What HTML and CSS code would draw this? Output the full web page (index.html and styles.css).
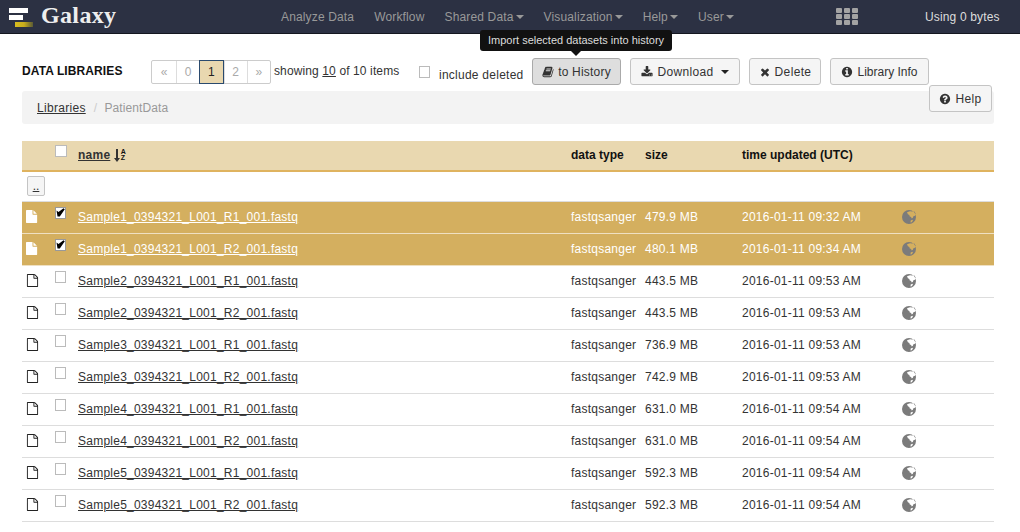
FILE: index.html
```html
<!DOCTYPE html>
<html lang="en">
<head>
  <meta charset="UTF-8" />
  <title>Galaxy</title>
  <link rel="stylesheet" href="styles.css">
</head>
<body>
  <svg class="defs" width="0" height="0">
    <symbol id="i-file-o" viewBox="0 0 1792 1792"><path d="M1596 380q28 28 48 76t20 88v1152q0 40-28 68t-68 28h-1344q-40 0-68-28t-28-68v-1600q0-40 28-68t68-28h896q40 0 88 20t76 48zm-444-244v376h376q-10-29-22-41l-313-313q-12-12-41-22zm384 1528v-1024h-416q-40 0-68-28t-28-68v-416h-768v1536h1280z"/></symbol>
    <symbol id="i-file" viewBox="0 0 1792 1792"><path d="M1024 512v-472q22 14 36 28l408 408q14 14 28 36h-472zm-128 32q0 40 28 68t68 28h544v1056q0 40-28 68t-68 28h-1344q-40 0-68-28t-28-68v-1600q0-40 28-68t68-28h800v544z"/></symbol>
    <symbol id="i-globe" viewBox="0 0 14 14"><path fill-rule="evenodd" d="M7 0a7 7 0 1 1 0 14A7 7 0 0 1 7 0zM5 2.2l.9 2.1 1.4.7.5 1.4 1.3.6.6 1.6 1.2-.9.5-1.5 1.6-.4.6-2.2-1.2-2L8 1.2zM8.7 10.4l-.2 2 1.2-.1 1.2-1.6-.3-1z"/></symbol>
    <symbol id="i-check" viewBox="0 0 11 11"><path d="M1.5 3.5 3.5 5 8.5 1.2 9.8 2.2 4.8 9.5H2.5z"/></symbol>
  </svg>

  <header class="navbar">
    <a class="brand">
      <span class="logo"><i class="bar-a"></i><i class="bar-b"></i><i class="bar-c"></i></span>
      <span class="brand-name">Galaxy</span>
    </a>
    <nav class="nav-menu">
      <a>Analyze Data</a>
      <a>Workflow</a>
      <a>Shared Data<b class="caret"></b></a>
      <a>Visualization<b class="caret"></b></a>
      <a>Help<b class="caret"></b></a>
      <a>User<b class="caret"></b></a>
    </nav>
    <svg class="apps" width="22" height="17" viewBox="0 0 22 17" fill="#a3a3a3">
      <rect width="6" height="5" rx="1"/><rect x="8" width="6" height="5" rx="1"/><rect x="16" width="6" height="5" rx="1"/>
      <rect y="6" width="6" height="5" rx="1"/><rect x="8" y="6" width="6" height="5" rx="1"/><rect x="16" y="6" width="6" height="5" rx="1"/>
      <rect y="12" width="6" height="5" rx="1"/><rect x="8" y="12" width="6" height="5" rx="1"/><rect x="16" y="12" width="6" height="5" rx="1"/>
    </svg>
    <span class="quota">Using 0 bytes</span>
  </header>

  <main class="page">
    <div class="toolbar">
      <strong class="title">DATA LIBRARIES</strong>
      <ul class="pager">
        <li class="wide">«</li><li>0</li><li class="current">1</li><li>2</li><li>»</li>
      </ul>
      <span class="showing">showing <u>10</u> of 10 items</span>
      <label class="include"><span class="box"></span><span class="include-text">include deleted</span></label>
      <button class="btn btn-history active">
        <svg class="ico" viewBox="0 0 1792 1792"><path d="M1703 478q40 57 18 129l-275 906q-19 64-76.5 107.5t-122.5 43.5h-923q-77 0-148.5-53.5t-99.5-131.5q-24-67-2-127 0-4 3-27t4-37q1-8-3-21.5t-3-19.5q2-11 8-21t16.5-23.5 16.5-23.5q23-38 45-91.5t30-91.5q3-10 .5-30t-.5-28q3-11 17-28t17-23q21-36 42-92t25-90q1-9-2.5-32t.5-28q4-13 22-30.5t22-22.5q19-26 42.5-84.5t27.5-96.5q1-8-3-25.5t-2-26.5q2-8 9-18t18-23 17-21q8-12 16.5-30.5t15-35 16-36 19.5-32 26.5-23.5 36-11.5 47.5 5.5l-1 3q38-9 51-9h761q74 0 114 56t18 130l-274 906q-36 119-71.5 153.5t-128.5 34.5h-869q-27 0-38 15-11 16-1 43 24 70 144 70h923q29 0 56-15.5t35-41.5l300-987q7-22 5-57 38 15 59 43zm-1064 2q-4 13 2 22.5t20 9.5h608q13 0 25.5-9.5t16.5-22.5l21-64q4-13-2-22.5t-20-9.5h-608q-13 0-25.5 9.5t-16.5 22.5zm-83 256q-4 13 2 22.5t20 9.5h608q13 0 25.5-9.5t16.5-22.5l21-64q4-13-2-22.5t-20-9.5h-608q-13 0-25.5 9.5t-16.5 22.5z"/></svg>
        to History
      </button>
      <button class="btn btn-download">
        <svg class="ico" viewBox="0 0 1792 1792"><path d="M1344 1344q0-26-19-45t-45-19-45 19-19 45 19 45 45 19 45-19 19-45zm256 0q0-26-19-45t-45-19-45 19-19 45 19 45 45 19 45-19 19-45zm128-224v320q0 40-28 68t-68 28h-1472q-40 0-68-28t-28-68v-320q0-40 28-68t68-28h465l135 136q58 56 136 56t136-56l136-136h464q40 0 68 28t28 68zm-325-569q17 41-14 70l-448 448q-18 19-45 19t-45-19l-448-448q-31-29-14-70 17-39 59-39h256v-448q0-26 19-45t45-19h256q26 0 45 19t19 45v448h256q42 0 59 39z"/></svg>
        Download <b class="caret dark"></b>
      </button>
      <button class="btn btn-delete">
        <svg class="ico" viewBox="0 0 1792 1792"><path d="M1490 1322q0 40-28 68l-136 136q-28 28-68 28t-68-28l-294-294-294 294q-28 28-68 28t-68-28l-136-136q-28-28-28-68t28-68l294-294-294-294q-28-28-28-68t28-68l136-136q28-28 68-28t68 28l294 294 294-294q28-28 68-28t68 28l136 136q28 28 28 68t-28 68l-294 294 294 294q28 28 28 68z"/></svg>
        Delete
      </button>
      <button class="btn btn-info">
        <svg class="ico" viewBox="0 0 1792 1792"><path d="M1152 1376v-160q0-14-9-23t-23-9h-96v-512q0-14-9-23t-23-9h-320q-14 0-23 9t-9 23v160q0 14 9 23t23 9h96v320h-96q-14 0-23 9t-9 23v160q0 14 9 23t23 9h448q14 0 23-9t9-23zm-128-896v-160q0-14-9-23t-23-9h-192q-14 0-23 9t-9 23v160q0 14 9 23t23 9h192q14 0 23-9t9-23zm640 416q0 209-103 385.5t-279.5 279.5-385.5 103-385.5-103-279.5-279.5-103-385.5 103-385.5 279.5-279.5 385.5-103 385.5 103 279.5 279.5 103 385.5z"/></svg>
        Library Info
      </button>
    </div>

    <div class="tooltip">Import selected datasets into history</div>
    <button class="btn btn-help">
      <svg class="ico" viewBox="0 0 1792 1792"><path d="M1024 1376v-192q0-14-9-23t-23-9h-192q-14 0-23 9t-9 23v192q0 14 9 23t23 9h192q14 0 23-9t9-23zm256-672q0-88-55.5-163t-138.5-116-170-41q-243 0-371 213-15 24 8 42l132 100q7 6 19 6 16 0 25-12 53-68 86-92 34-24 86-24 48 0 85.5 26t37.5 59q0 38-20 61t-68 45q-63 28-115.5 86.5t-52.5 125.5v36q0 14 9 23t23 9h192q14 0 23-9t9-23q0-19 21.5-49.5t54.5-49.5q32-18 49-28.5t46-35 44.5-48 28-60.5 12.5-81zm384 192q0 209-103 385.5t-279.5 279.5-385.5 103-385.5-103-279.5-279.5-103-385.5 103-385.5 279.5-279.5 385.5-103 385.5 103 279.5 279.5 103 385.5z"/></svg>
      Help
    </button>

    <div class="crumbs"><a>Libraries</a><span class="sep">/</span><span class="crumb-here">PatientData</span></div>

    <table class="files">
      <colgroup>
        <col class="c-icon"><col class="c-check"><col class="c-name"><col class="c-type"><col class="c-size"><col class="c-time"><col>
      </colgroup>
      <thead>
        <tr>
          <th></th>
          <th><span class="box"></span></th>
          <th><a class="sort">name</a> <span class="sort-icon"><svg width="6" height="13" viewBox="0 0 6 13"><path d="M2 0h2v9h2L3 13 0 9h2z"/></svg><span class="az">A<br>Z</span></span></th>
          <th>data type</th>
          <th>size</th>
          <th>time updated (UTC)</th>
          <th></th>
        </tr>
      </thead>
      <tbody>
        <tr class="up"><td colspan="7"><button class="btn-up">..</button></td></tr>
        <tr class="selected"><td><svg class="file"><use href="#i-file"/></svg></td><td><span class="box on"><svg><use href="#i-check"/></svg></span></td><td><a>Sample1_0394321_L001_R1_001.fastq</a></td><td>fastqsanger</td><td>479.9 MB</td><td>2016-01-11 09:32 AM</td><td><svg class="globe"><use href="#i-globe"/></svg></td></tr>
        <tr class="selected"><td><svg class="file"><use href="#i-file"/></svg></td><td><span class="box on"><svg><use href="#i-check"/></svg></span></td><td><a>Sample1_0394321_L001_R2_001.fastq</a></td><td>fastqsanger</td><td>480.1 MB</td><td>2016-01-11 09:34 AM</td><td><svg class="globe"><use href="#i-globe"/></svg></td></tr>
        <tr><td><svg class="file"><use href="#i-file-o"/></svg></td><td><span class="box"></span></td><td><a>Sample2_0394321_L001_R1_001.fastq</a></td><td>fastqsanger</td><td>443.5 MB</td><td>2016-01-11 09:53 AM</td><td><svg class="globe"><use href="#i-globe"/></svg></td></tr>
        <tr><td><svg class="file"><use href="#i-file-o"/></svg></td><td><span class="box"></span></td><td><a>Sample2_0394321_L001_R2_001.fastq</a></td><td>fastqsanger</td><td>443.5 MB</td><td>2016-01-11 09:53 AM</td><td><svg class="globe"><use href="#i-globe"/></svg></td></tr>
        <tr><td><svg class="file"><use href="#i-file-o"/></svg></td><td><span class="box"></span></td><td><a>Sample3_0394321_L001_R1_001.fastq</a></td><td>fastqsanger</td><td>736.9 MB</td><td>2016-01-11 09:53 AM</td><td><svg class="globe"><use href="#i-globe"/></svg></td></tr>
        <tr><td><svg class="file"><use href="#i-file-o"/></svg></td><td><span class="box"></span></td><td><a>Sample3_0394321_L001_R2_001.fastq</a></td><td>fastqsanger</td><td>742.9 MB</td><td>2016-01-11 09:53 AM</td><td><svg class="globe"><use href="#i-globe"/></svg></td></tr>
        <tr><td><svg class="file"><use href="#i-file-o"/></svg></td><td><span class="box"></span></td><td><a>Sample4_0394321_L001_R1_001.fastq</a></td><td>fastqsanger</td><td>631.0 MB</td><td>2016-01-11 09:54 AM</td><td><svg class="globe"><use href="#i-globe"/></svg></td></tr>
        <tr><td><svg class="file"><use href="#i-file-o"/></svg></td><td><span class="box"></span></td><td><a>Sample4_0394321_L001_R2_001.fastq</a></td><td>fastqsanger</td><td>631.0 MB</td><td>2016-01-11 09:54 AM</td><td><svg class="globe"><use href="#i-globe"/></svg></td></tr>
        <tr><td><svg class="file"><use href="#i-file-o"/></svg></td><td><span class="box"></span></td><td><a>Sample5_0394321_L001_R1_001.fastq</a></td><td>fastqsanger</td><td>592.3 MB</td><td>2016-01-11 09:54 AM</td><td><svg class="globe"><use href="#i-globe"/></svg></td></tr>
        <tr><td><svg class="file"><use href="#i-file-o"/></svg></td><td><span class="box"></span></td><td><a>Sample5_0394321_L001_R2_001.fastq</a></td><td>fastqsanger</td><td>592.3 MB</td><td>2016-01-11 09:54 AM</td><td><svg class="globe"><use href="#i-globe"/></svg></td></tr>
      </tbody>
    </table>
  </main>
</body>
</html>
```

FILE: styles.css
```css
* {
  box-sizing: border-box;
}

html, body {
  height: 532px;
  overflow: hidden;
}

body {
  margin: 0;
  background: #fff;
  color: #333;
  font-family: "Liberation Sans", Arial, sans-serif;
  font-size: 12px;
  position: relative;
}

.defs {
  position: absolute;
}

/* top bar */
.navbar {
  display: flex;
  align-items: center;
  height: 34px;
  background: #2c3143;
  border-bottom: 1px solid #14161f;
  color: #999;
}

.brand {
  display: flex;
  align-items: center;
  width: 281px;
  padding-left: 8px;
}

.logo {
  position: relative;
  width: 33px;
  height: 33px;
  flex: none;
}

.logo i {
  position: absolute;
  height: 5px;
}

.bar-a { left: 1px; top: 8px; width: 19px; background: #fff; }
.bar-b { left: 1px; top: 15px; width: 14px; background: #fff; }
.bar-c { left: 7px; top: 22px; width: 18px; background: linear-gradient(90deg, #d9bd1f, #c9ad1c 50%, #5a5a35); }

.brand-name {
  margin-top: -3px;
  font-family: "Liberation Serif", serif;
  font-size: 24px;
  font-weight: bold;
  letter-spacing: 0.35px;
  color: #eee;
}

.nav-menu {
  display: flex;
  gap: 20px;
  width: 555px;
  font-size: 12px;
  letter-spacing: 0.15px;
}

.caret {
  display: inline-block;
  width: 0;
  height: 0;
  margin-left: 2px;
  vertical-align: middle;
  border-left: 4px solid transparent;
  border-right: 4px solid transparent;
  border-top: 4px solid #999;
}

.caret.dark {
  border-top-color: #222;
  margin-left: 3px;
}

.apps {
  flex: none;
}

.quota {
  margin-left: 67px;
  color: #ddd;
  font-size: 12px;
  letter-spacing: 0.15px;
  white-space: nowrap;
}

/* page */
.page {
  position: relative;
  width: 994px;
  padding: 24px 0 0 22px;
}

.toolbar {
  display: flex;
  align-items: flex-start;
  height: 33px;
}

.title {
  width: 129px;
  margin-top: 6px;
  color: #111;
  font-size: 12px;
  letter-spacing: 0.1px;
}

.pager {
  display: flex;
  width: 120px;
  height: 24px;
  margin: 2px 0 0;
  padding: 0;
  list-style: none;
  border: 1px solid #ccc;
  border-radius: 2px;
  color: #aaa;
}

.pager li {
  flex: 1;
  display: flex;
  align-items: center;
  justify-content: center;
  border-left: 1px solid #ddd;
}

.pager li:first-child {
  border-left: 0;
}

.pager .wide {
  flex: none;
  width: 24px;
}

.pager .current {
  margin: -1px 0;
  background: #e9d8b0;
  border: 1px solid #2a4a6e;
  color: #222;
}

.showing {
  margin: 6px 0 0 3px;
  width: 145px;
  color: #333;
  letter-spacing: 0.12px;
  white-space: nowrap;
}

.include {
  display: flex;
  width: 113px;
  margin-top: 8px;
}

.include-text {
  margin: 2px 0 0 9px;
  letter-spacing: 0.25px;
  white-space: nowrap;
}

.box {
  display: inline-block;
  width: 11px;
  height: 12px;
  background: #fff;
  border: 1px solid #bbb;
}

.box.on {
  border-color: #999;
  position: relative;
}

.box.on svg {
  display: block;
  position: absolute;
  left: -1px;
  top: -1px;
  width: 11px;
  height: 11px;
  fill: #000;
}

.btn {
  display: flex;
  align-items: center;
  justify-content: center;
  gap: 4px;
  height: 27px;
  padding: 0;
  background: #f5f5f5;
  border: 1px solid #c4c4c4;
  border-radius: 3px;
  color: #333;
  font-family: inherit;
  font-size: 12px;
  letter-spacing: 0.35px;
}

.btn.active {
  background: #dedede;
  border-color: #aaa;
}

.ico {
  width: 12px;
  height: 12px;
  fill: #333;
  flex: none;
}

.btn-history { width: 89px; letter-spacing: 0.2px; }
.btn-download { width: 110px; margin-left: 9px; }
.btn-delete { width: 72px; margin-left: 9px; }
.btn-info { width: 99px; margin-left: 9px; letter-spacing: 0; }

.btn-help {
  position: absolute;
  left: 929px;
  top: 51px;
  width: 63px;
}

.tooltip {
  position: absolute;
  left: 480px;
  top: -4px;
  width: 192px;
  height: 21px;
  background: #111;
  border-radius: 3px;
  color: #ddd;
  font-size: 11px;
  line-height: 21px;
  text-align: center;
  z-index: 2;
}

.tooltip::after {
  content: "";
  position: absolute;
  left: 91px;
  top: 21px;
  border-left: 5px solid transparent;
  border-right: 5px solid transparent;
  border-top: 5px solid #111;
}

.crumbs {
  display: flex;
  align-items: center;
  height: 33px;
  padding-left: 15px;
  background: #f3f3f3;
  border-radius: 3px;
  letter-spacing: 0.3px;
}

.crumbs a {
  color: #333;
  text-decoration: underline;
}

.sep {
  margin: 0 7px 0 8px;
  color: #ccc;
}

.crumb-here {
  color: #999;
  letter-spacing: 0.1px;
}

/* table */
.files {
  width: 972px;
  margin-top: 17px;
  border-collapse: collapse;
  table-layout: fixed;
  letter-spacing: 0.24px;
}

.c-icon { width: 28px; }
.c-check { width: 23px; }
.c-name { width: 493px; }
.c-type { width: 74px; }
.c-size { width: 97px; }
.c-time { width: 160px; }

.files thead tr {
  height: 30px;
  background: #e9d8b0;
  border-bottom: 2px solid #dfb35f;
}

.files th {
  padding: 0 5px 2px;
  color: #111;
  font-size: 12px;
  text-align: left;
  white-space: nowrap;
  letter-spacing: 0;
}

.files th .box {
  display: block;
  margin-top: -7px;
  width: 12px;
}

.sort {
  color: #333;
  letter-spacing: 0.24px;
  text-decoration: underline;
}

.sort-icon {
  display: inline-flex;
  align-items: center;
  gap: 1px;
  height: 13px;
  vertical-align: -3px;
}

.sort-icon svg {
  fill: #333;
}

.az {
  font-size: 7px;
  line-height: 6.5px;
}

.files td {
  height: 32px;
  padding: 0 5px 1px;
  white-space: nowrap;
  vertical-align: middle;
}

.files tbody tr {
  border-bottom: 1px solid #ddd;
}

.files td a {
  color: #333;
  text-decoration: underline;
}

.files .up td {
  height: 30px;
  padding: 0 5px;
}

.btn-up {
  display: block;
  width: 18px;
  height: 20px;
  padding: 0;
  background: #f5f5f5;
  border: 1px solid #c4c4c4;
  border-radius: 2px;
  color: #333;
  font-family: inherit;
  font-size: 12px;
  text-decoration: underline;
}

.selected {
  background: #d4af5f;
  color: #fff;
}

.files .selected {
  border-bottom-color: #efe0c2;
}

.files .selected td a {
  color: #fff;
}

.file {
  display: block;
  width: 13px;
  height: 13px;
  margin-left: -1px;
  fill: #222;
}

.selected .file {
  fill: #fff;
}

.files td .box {
  display: block;
  margin-top: -8px;
}

.globe {
  display: block;
  width: 14px;
  height: 14px;
  fill: #7b7b7b;
}
```
